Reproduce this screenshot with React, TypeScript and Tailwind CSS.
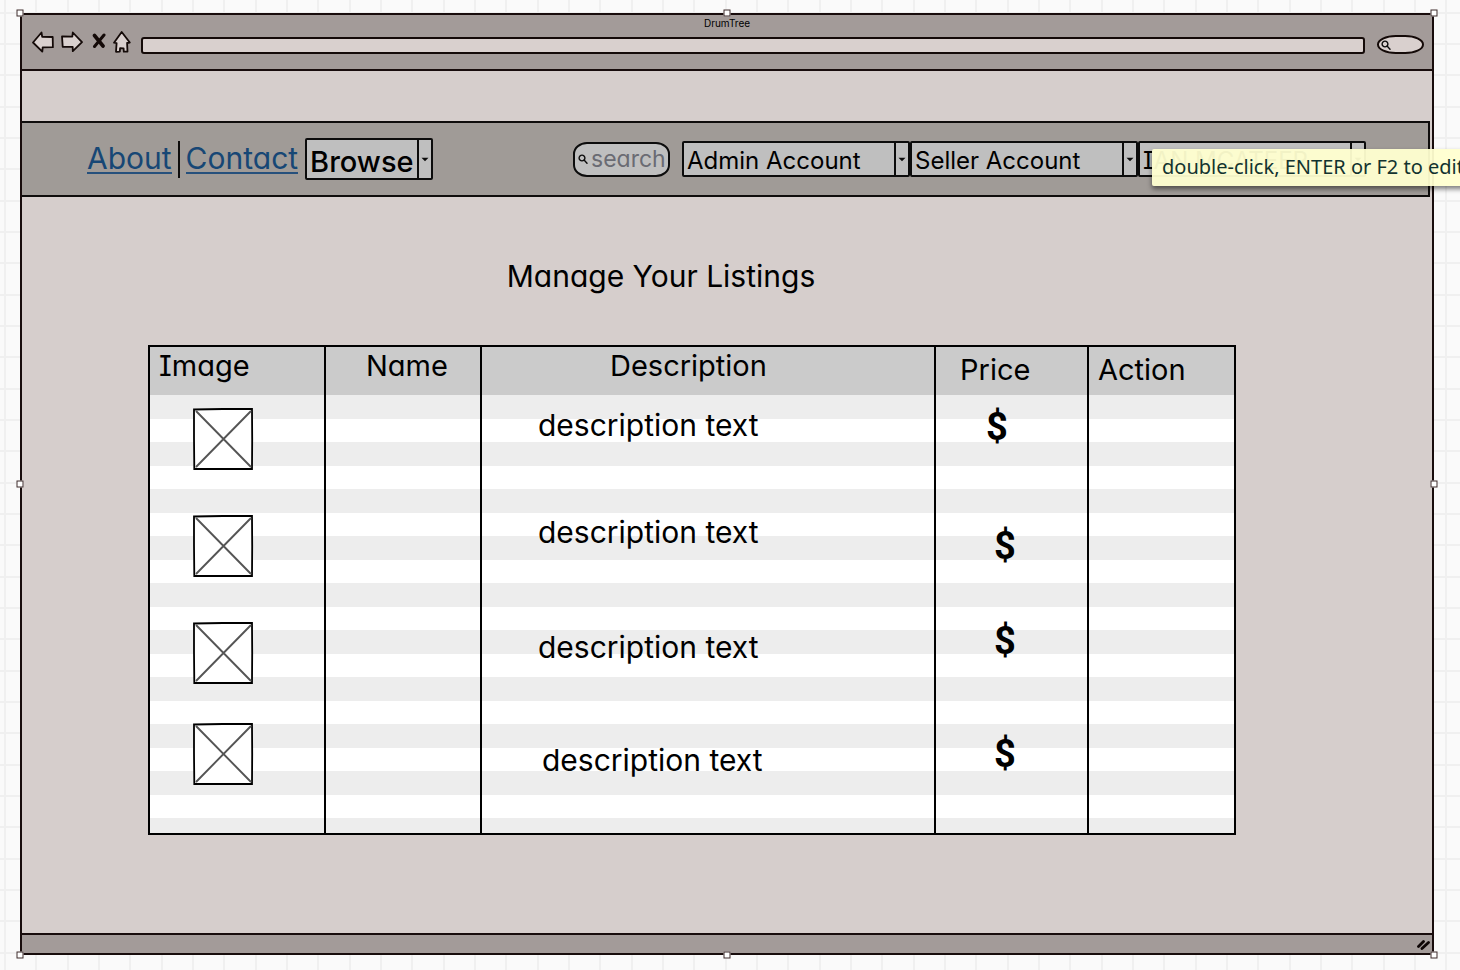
import React from "react";

type Listing = {
  id: number;
  height: string;
  description: string;
  descriptionPad: string;
  price: string;
  pricePad: string;
};

const listings: Listing[] = [
  { id: 1, height: "h-[107px]", description: "description text", descriptionPad: "pt-3 pl-14", price: "$", pricePad: "pt-3 pl-[50px]" },
  { id: 2, height: "h-[107px]", description: "description text", descriptionPad: "pt-3 pl-14", price: "$", pricePad: "pt-6 pl-[58px]" },
  { id: 3, height: "h-[101px]", description: "description text", descriptionPad: "pt-5 pl-14", price: "$", pricePad: "pt-3 pl-[58px]" },
  { id: 4, height: "h-[124px]", description: "description text", descriptionPad: "pt-8 pl-15", price: "$", pricePad: "pt-6 pl-[58px]" },
];

const handles = [
  "left-0 top-0 -translate-x-1/2 -translate-y-1/2",
  "left-1/2 top-0 -translate-x-1/2 -translate-y-1/2",
  "left-full top-0 -translate-x-1/2 -translate-y-1/2",
  "left-0 top-1/2 -translate-x-1/2 -translate-y-1/2",
  "left-full top-1/2 -translate-x-1/2 -translate-y-1/2",
  "left-0 top-full -translate-x-1/2 -translate-y-1/2",
  "left-1/2 top-full -translate-x-1/2 -translate-y-1/2",
  "left-full top-full -translate-x-1/2 -translate-y-1/2",
];

function ArrowLeft() {
  return (
    <svg width="22" height="22" viewBox="0 0 22 22" fill="#d9d0ce" stroke="#140a08" strokeWidth="1.8" strokeLinejoin="round" aria-hidden="true">
      <path d="M1 11.5 9.500 1.500l.7 4.300 10.500.2.200 10.200-10.200.2-.4 4.200Z" />
    </svg>
  );
}

function ArrowRight() {
  return (
    <svg width="22" height="22" viewBox="0 0 22 22" fill="#d9d0ce" stroke="#140a08" strokeWidth="1.8" strokeLinejoin="round" aria-hidden="true">
      <path d="M21 11.200 11.800 1.500l-.5 4.100-10.300-.3.700 10.500 10 .1.100 4.300Z" />
    </svg>
  );
}

function Cross() {
  return (
    <svg width="14" height="16" viewBox="0 0 14 16" fill="none" stroke="#140a08" strokeLinecap="round" aria-hidden="true">
      <path d="M2.500 2.500 11 13" strokeWidth="3.600" />
      <path d="M12 2 2.500 13.500" strokeWidth="3" />
    </svg>
  );
}

function House() {
  return (
    <svg width="18" height="22" viewBox="0 0 18 22" fill="#d9d0ce" stroke="#140a08" strokeWidth="1.800" strokeLinejoin="round" aria-hidden="true">
      <path d="M8.700 1 1 11.700l2.600.5-.6 8.600 3.800-.1.300-3.500 3.500.1.200 3.400 3.700-.1-.4-8.600 2.700-.5Z" />
    </svg>
  );
}

function Magnifier() {
  return (
    <svg width="10" height="10" viewBox="0 0 10 10" fill="none" stroke="#0c0c0c" strokeWidth="1.400" strokeLinecap="round" className="shrink-0" aria-hidden="true">
      <circle cx="4" cy="4" r="2.900" />
      <path d="m6.300 6.300 2.700 2.900" />
    </svg>
  );
}

function Dropdown({ label, value, className, textClass }: { label: string; value: string; className: string; textClass: string }) {
  return (
    <div className={`grid grid-cols-[1fr_14px] grid-rows-[minmax(0,1fr)] rounded-xs border-2 border-[#0c0c0c] bg-[#bfbfbf] ${className}`}>
      <select aria-label={label} className={`col-span-2 col-start-1 row-start-1 h-full w-full min-w-0 appearance-none bg-transparent pb-1 pl-[3px] text-black ${textClass}`}>
        <option>{value}</option>
      </select>
      <span className="pointer-events-none col-start-2 row-start-1 flex items-center justify-center border-l-2 border-[#0c0c0c]">
        <svg width="8" height="5" viewBox="0 0 8 5" aria-hidden="true">
          <path d="M.5.7h7L4 4.300Z" fill="#0c0c0c" />
        </svg>
      </span>
    </div>
  );
}

function Placeholder() {
  return (
    <svg width="61" height="62" viewBox="0 0 61 62" role="img" aria-label="Listing image" className="block">
      <path d="M1 1.500 30 1h29l.2 30-.2 30H1.300L1 30Z" fill="#fff" stroke="#000" strokeWidth="1.800" />
      <path d="m3.500 3.500 54 55m0-55-54 55" stroke="#555" strokeWidth="1.900" strokeLinecap="round" />
    </svg>
  );
}

export default function App() {
  return (
    <div className="relative flex min-h-screen flex-col overflow-hidden bg-[#fafafa] bg-[linear-gradient(90deg,transparent_4px,#f0f0f0_4px,#f0f0f0_6px,transparent_6px,transparent_35px,#f0f0f0_35px,#f0f0f0_37px,transparent_37px,transparent_67px,#f0f0f0_67px,#f0f0f0_69px,transparent_69px),linear-gradient(180deg,transparent_12px,#f0f0f0_12px,#f0f0f0_14px,transparent_14px,transparent_43px,#f0f0f0_43px,#f0f0f0_45px,transparent_45px,transparent_74px,#f0f0f0_74px,#f0f0f0_76px,transparent_76px)] bg-[length:94px_94px] pt-[13px] pr-[26px] pb-[15px] pl-5 font-['Inter','Liberation_Sans',sans-serif] text-black [font-feature-settings:'cv08','cv11','ss03']">
      <div className="relative flex flex-1 flex-col">
        <div className="flex flex-1 flex-col border-2 border-[#180c0c] bg-[#d6cecc]">
          <header className="flex h-[56px] flex-col border-b-2 border-[#180c0c] bg-[#a39b99]">
            <h1 className="h-4 text-center text-[10px] leading-4">DrumTree</h1>
            <div className="flex items-start pr-2 pl-2.5">
              <button type="button" aria-label="Back" className="mr-[7px]"><ArrowLeft /></button>
              <button type="button" aria-label="Forward" className="mr-[9px]"><ArrowRight /></button>
              <button type="button" aria-label="Stop" className="mt-0.5 mr-[7px]"><Cross /></button>
              <button type="button" aria-label="Home" className="mr-[10px]"><House /></button>
              <input aria-label="Address" className="mt-1.5 h-[17px] min-w-0 flex-1 rounded-[3px] border-2 border-[#140a08] bg-[#d9d0ce] px-2 text-[10px]" />
              <label className="mt-1 ml-3 flex h-[19px] w-[47px] items-center rounded-[40%/50%] border-2 border-[#140a08] bg-[#d9d0ce] pl-0.5">
                <Magnifier />
                <input aria-label="Web search" className="w-full min-w-0 bg-transparent text-[10px] outline-none" />
              </label>
            </div>
          </header>

          <nav className="mt-[50px] mr-[2px] flex h-[76px] items-center border-y-2 border-r-2 border-[#0f0d0c] bg-[#a09b97] pr-[62px] pl-[65px]">
            <a href="#about" className="border-b-2 border-[#26507c] text-[30px] leading-7 text-[#174775]">About</a>
            <span className="mx-1.5 h-[37px] w-0.5 bg-[#0f0d0c]" />
            <a href="#contact" className="border-b-2 border-[#26507c] text-[30px] leading-7 text-[#174775]">Contact</a>
            <Dropdown label="Browse" value="Browse" className="ml-[7px] h-[42px] w-[128px]" textClass="text-[29px] font-medium" />
            <label className="ml-auto flex h-[35px] w-[97px] items-center gap-[3px] rounded-[14px/12px] border-2 border-[#0c0c0c] bg-[#bfbfbf] pl-[3px]">
              <Magnifier />
              <input aria-label="Search" placeholder="search" className="w-full min-w-0 bg-transparent text-[23px] outline-none placeholder:text-[#6a6b73]" />
            </label>
            <Dropdown label="Admin" value="Admin Account" className="ml-3 h-9 w-[228px]" textClass="text-[24px]" />
            <Dropdown label="Seller" value="Seller Account" className="h-9 w-[228px]" textClass="text-[24px]" />
            <Dropdown label="User" value="IAN MCATEER" className="h-9 w-[228px]" textClass="text-[24px]" />
          </nav>

          <main className="flex-1 pt-[60px] pr-[196px] pb-[60px] pl-[126px]">
            <h2 className="mb-[50px] pr-[62px] text-center text-[30px] leading-[38px]">Manage Your Listings</h2>
            <table className="w-full table-fixed border-collapse border-2 border-black text-left text-[30px] leading-9">
              <colgroup>
                <col className="w-[176px]" />
                <col className="w-[156px]" />
                <col />
                <col className="w-[153px]" />
                <col className="w-[147px]" />
              </colgroup>
              <thead className="bg-[#cbcbcb] text-[29px]">
                <tr className="h-[49px] align-top *:border-x-2 *:border-black *:font-normal">
                  <th scope="col" className="pt-px pl-[9px]">Image</th>
                  <th scope="col" className="pt-px pl-10">Name</th>
                  <th scope="col" className="pt-px pl-32">Description</th>
                  <th scope="col" className="pt-[5px] pl-6">Price</th>
                  <th scope="col" className="pt-[5px] pl-[9px]">Action</th>
                </tr>
              </thead>
              <tbody className="bg-[repeating-linear-gradient(180deg,#ededed_0px,#ededed_24px,#fff_24px,#fff_47px)]">
                {listings.map((item) => (
                  <tr key={item.id} className={`align-top *:border-x-2 *:border-black ${item.height}`}>
                    <td className="pt-[13px] pl-[43px]"><Placeholder /></td>
                    <td />
                    <td className={item.descriptionPad}>{item.description}</td>
                    <td className={`font-['Roboto',sans-serif] text-[38px] leading-10 font-bold ${item.pricePad}`}>{item.price}</td>
                    <td />
                  </tr>
                ))}
              </tbody>
            </table>
          </main>

          <footer className="flex h-[20px] items-center justify-end border-t-2 border-[#180c0c] bg-[#a39b99] pr-0.5">
            <svg width="13" height="11" viewBox="0 0 13 11" stroke="#0c0404" strokeWidth="2.800" strokeLinecap="round" aria-hidden="true">
              <path d="M1.500 7.500 6.500 2.500M5 9.500 11.500 3.500" />
            </svg>
          </footer>
        </div>

        {handles.map((place) => (
          <span key={place} className={`absolute size-[7px] border border-[#3d2b2b] bg-white ${place}`} />
        ))}
      </div>

      <div role="tooltip" className="absolute top-[149px] left-[1152px] h-[37px] rounded-xs bg-[#ffffd0]/95 px-2.5 font-['Noto_Sans','Open_Sans',sans-serif] text-[20px] leading-[35px] whitespace-nowrap text-[#12332f] shadow-[0_3px_5px_rgba(0,0,0,0.5)]">
        double-click, ENTER or F2 to edit
      </div>
    </div>
  );
}
